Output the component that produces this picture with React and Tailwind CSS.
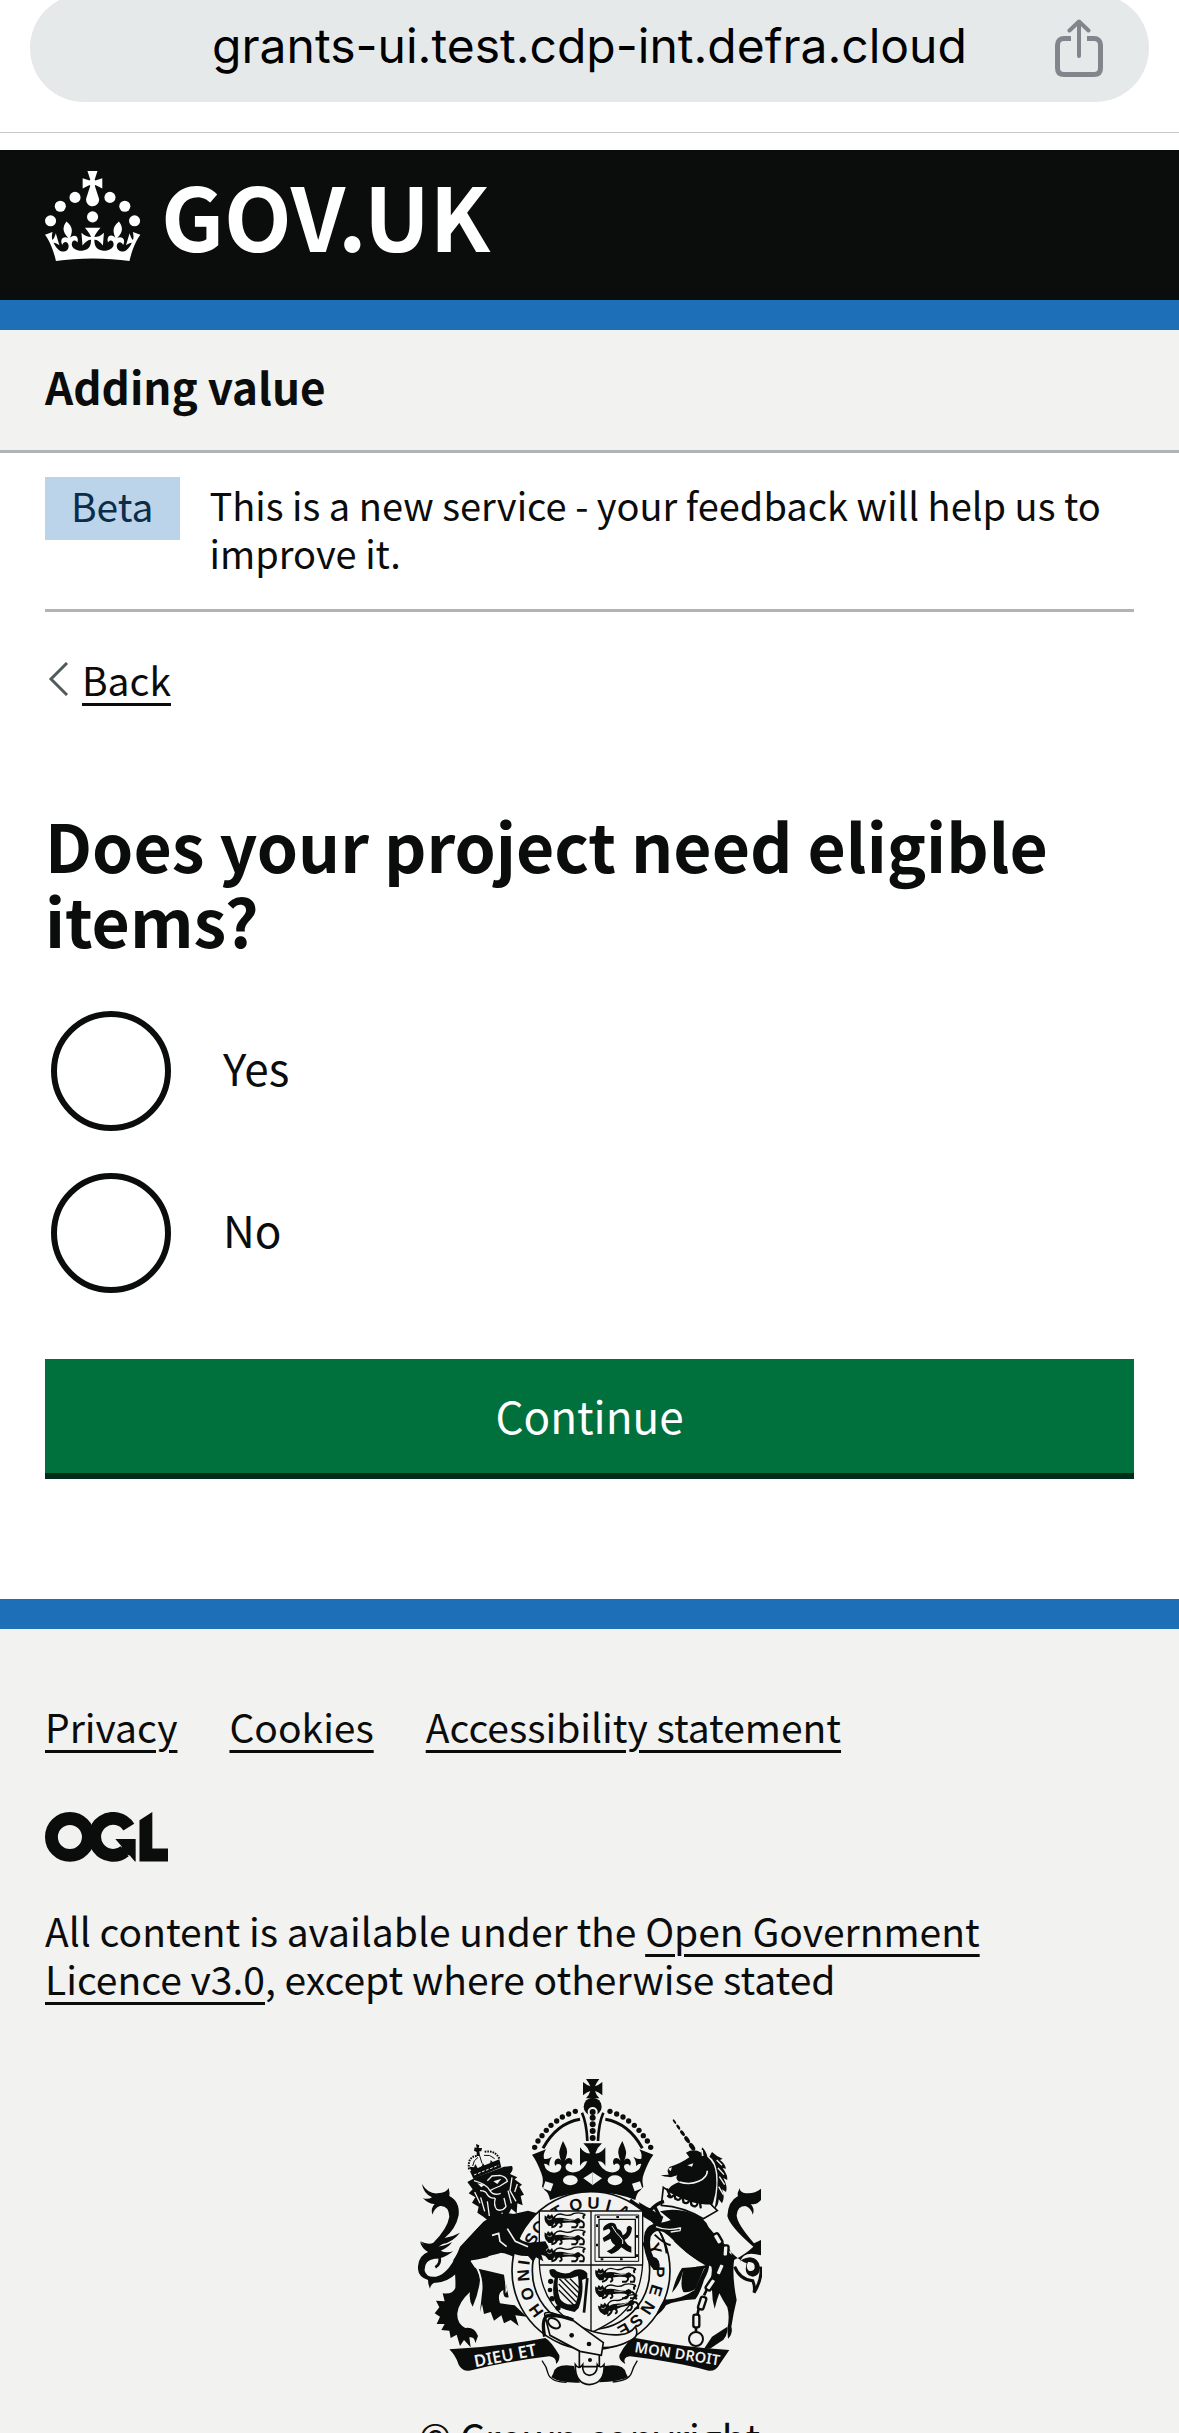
import React, { useState } from "react";

const INK = "#0b0c0c";
const PAPER = "#f2f2f0";

function ShareIcon() {
  return (
    <svg viewBox="0 0 48 58" className="h-[58px] w-12" fill="none" stroke="#80868b" strokeLinecap="round" strokeLinejoin="round">
      <path d="M16 19.500H9C5 19.500 2.500 22 2.500 26V49c0 4.500 2.500 6.500 6.500 6.500h30c4 0 6.500-2 6.500-6.500V26c0-4-2.500-6.500-6.500-6.500H32" strokeWidth="5" strokeLinecap="butt" />
      <path d="M24 3v34" strokeWidth="4" />
      <path d="M14.500 11.500 24 2.500l9.500 9" strokeWidth="4" />
    </svg>
  );
}

function CrownMark() {
  return (
    <svg viewBox="0 0 64 60" className="h-[90px] w-24 shrink-0" fill="#fff" aria-hidden="true">
      <circle cx="20" cy="17.6" r="3.7" />
      <circle cx="10.2" cy="23.5" r="3.7" />
      <circle cx="3.7" cy="33.2" r="3.7" />
      <circle cx="31.7" cy="30.6" r="3.7" />
      <circle cx="43.3" cy="17.6" r="3.7" />
      <circle cx="53.2" cy="23.5" r="3.7" />
      <circle cx="59.7" cy="33.2" r="3.7" />
      <path d="M33.1,9.8c.2-.1.3-.3.5-.5l4.6,2.4v-6.8l-4.6,1.5c-.1-.2-.3-.3-.5-.5l1.9-5.9h-6.7l1.9,5.9c-.2.1-.3.3-.5.5l-4.6-1.5v6.8l4.6-2.4c.1.2.3.3.5.5l-2.6,8c-.9,2.8,1.2,5.7,4.1,5.7h0c3,0,5.1-2.9,4.1-5.7l-2.6-8ZM37,37.9s-3.4,3.8-4.1,6.1c2.2,0,4.2-.5,6.4-2.8l-.7,8.5c-2-2.8-4.4-4.1-5.7-3.8.1,3.1.5,6.7,5.8,7.2,3.7.3,6.7-1.5,7-3.8.4-2.6-2-4.3-3.7-1.6-1.4-4.5,2.4-6.1,4.9-3.2-1.9-4.5-1.8-7.7,2.4-10.9,3,4,2.6,7.3-1.2,11.1,2.4-1.3,6.2,0,4,4.6-1.2-2.8-3.7-2.2-4.2.2-.3,1.7.7,3.7,3,4.2,1.9.3,4.7-.9,7-5.9-1.3,0-2.4.7-3.9,1.7l2.4-8c.6,2.3,1.4,3.7,2.2,4.5.6-1.6.5-2.8,0-5.3l5,1.8c-2.6,3.6-5.2,8.7-7.3,17.5-7.4-1.1-15.7-1.7-24.5-1.7h0c-8.8,0-17.1.6-24.5,1.7-2.1-8.9-4.7-13.9-7.3-17.5l5-1.8c-.5,2.5-.6,3.7,0,5.3.8-.8,1.6-2.3,2.2-4.5l2.4,8c-1.5-1-2.6-1.7-3.9-1.7,2.3,5,5.2,6.2,7,5.9,2.3-.4,3.3-2.4,3-4.2-.5-2.4-3-3.1-4.2-.2-2.2-4.6,1.6-6,4-4.6-3.7-3.7-4.2-7.1-1.2-11.1,4.2,3.2,4.3,6.4,2.4,10.9,2.5-2.8,6.3-1.3,4.9,3.2-1.8-2.7-4.1-1-3.7,1.6.3,2.3,3.3,4.1,7,3.8,5.4-.5,5.7-4.2,5.8-7.2-1.3-.2-3.7,1-5.7,3.8l-.7-8.5c2.2,2.3,4.2,2.7,6.4,2.8-.7-2.3-4.1-6.1-4.1-6.1h10.6Z" />
    </svg>
  );
}

function LicenceMark() {
  return (
    <svg viewBox="0 0 483 196" className="h-[50px] w-[123px]" fill="none" stroke={INK} strokeWidth="50.5" role="img" aria-label="OGL">
      <circle cx="97.8" cy="97.8" r="72.5" />
      <path d="M329 59A72.5 72.5 0 1 0 313 154" />
      <path d="M276 106h80v88h-3l-20-23-26-8-7-30Z" fill={INK} stroke="none" />
      <path d="M371 32.5 421.5 0v143H483v51H371Z" fill={INK} stroke="none" />
    </svg>
  );
}

const PEARLS = [[526, 154], [506, 162], [487, 171], [470, 183], [453, 196], [439, 211], [426, 227], [414, 243], [404, 262]];

/* Letters of the garter motto with their bearing, in degrees clockwise from due west. */
const GARTER_LETTERS = [["H", -36], ["O", -20], ["N", -4], ["I", 7], ["S", 28], ["O", 40], ["T", 60], ["Q", 77], ["U", 92], ["I", 105], ["A", 119], ["Y", 161], ["P", 181], ["E", 197], ["N", 213], ["S", 228], ["E", 241]];

function CrownHalf() {
  return (
    <g>
      {PEARLS.map(([x, y]) => (
        <circle key={x} cx={x} cy={y} r="8" />
      ))}
      <path d="M540 178Q470 190 429 265" fill="none" stroke={INK} strokeWidth="9" />
      <path d="M546 158Q560 190 562 243" fill="none" stroke={INK} strokeWidth="8" />
      <path d="M396 284 438 268Q428 284 432 296Q442 300 456 290Q446 304 448 318Q438 310 432 312Q438 338 462 338Q480 338 484 322Q484 312 474 312Q468 312 466 318Q460 306 468 298Q478 292 484 302Q474 282 480 266Q484 254 489 243Q496 256 500 266Q504 282 494 302Q502 290 514 296Q520 306 514 316Q510 308 502 311Q492 318 500 330Q510 340 528 336Q552 330 562 304Q548 302 540 318V262Q554 282 570 280Q564 262 550 250H579V395Q500 398 450 420Q446 398 436 392L426 380Q432 360 424 340Q412 306 396 284Z" />
      <ellipse cx="511" cy="361" rx="22" ry="15" fill={PAPER} />
      <path d="M436 364 460 371 452 394 429 385Z" fill={PAPER} />
      <path d="M550 355 579 336V376Z" fill={PAPER} />
    </g>
  );
}

function PassantBeast({ x, y }) {
  return (
    <g transform={`translate(${x} ${y})`}>
      <path d="M4 4 10 8 14 0 20 6 26 0 30 8 36 4Q38 16 34 24L28 36H16L6 24Q2 14 4 4Z" />
      <path d="M30 14Q50 8 70 14T104 12Q116 16 112 24T92 26Q72 24 54 28L34 30Z" />
      <path d="M34 8Q44-4 60 2T92-2Q112-6 126 2" fill="none" stroke={INK} strokeWidth="4" />
      <path d="M126 2Q116 6 122 14M42 26Q38 38 24 40M52 26Q60 38 48 40M98 24Q108 32 96 40H84M112 20Q126 24 120 40H108" fill="none" stroke={INK} strokeWidth="6" />
      <path d="M12 14Q18 20 26 14M60 18Q80 22 96 16" fill="none" stroke={PAPER} strokeWidth="2" />
    </g>
  );
}

function Shield() {
  return (
    <g>
      <path d="M418 453H728V610Q722 730 636 784Q600 806 573 818Q540 806 500 776Q422 716 418 610Z" fill={PAPER} stroke={INK} strokeWidth="4" />
      <path d="M573 453V818M418 615H728" stroke={INK} strokeWidth="4" />
      <PassantBeast x={430} y={462} />
      <PassantBeast x={430} y={513} />
      <PassantBeast x={430} y={564} />
      <PassantBeast x={582} y={625} />
      <PassantBeast x={582} y={675} />
      <g transform="translate(6 0) rotate(-14 590 730)">
        <PassantBeast x={582} y={732} />
      </g>
      <g fill="none" stroke={INK}>
        <path d="M585 465H716V604H585Z" strokeWidth="3" />
        <path d="M597 478H706V592H597Z" strokeWidth="4" />
        <path d="M591 471H711V598H591Z" strokeWidth="6" strokeDasharray="8 50" />
      </g>
      <path d="M622 492Q634 484 646 492L652 506Q666 510 668 526Q684 520 680 504Q688 490 696 504Q694 530 674 540Q680 556 694 560V578Q678 574 664 562Q650 578 634 582L620 574Q636 568 646 556Q634 548 632 536L612 546 608 534 626 522Q636 512 626 506L610 512Q606 500 622 492Z" />
      <path d="M636 498Q648 520 660 530T668 552" fill="none" stroke={PAPER} strokeWidth="3" />
      <path d="M448 630Q462 622 470 634Q500 648 524 630Q548 622 562 640V654L546 660Q552 700 536 744L524 756Q500 752 484 744Q464 736 462 714Q456 684 464 654Q448 650 448 630Z" />
      <path d="M474 654Q506 660 534 648Q540 700 526 732Q494 738 480 716Q470 690 474 654Z" fill={PAPER} />
      <path d="M476 690 522 736M476 672 528 726M478 656 532 712M494 656 536 698M510 656 538 684" stroke={INK} strokeWidth="4" />
      <circle cx="452" cy="664" r="8" />
      <circle cx="450" cy="690" r="7" />
      <circle cx="456" cy="716" r="8" />
      <circle cx="474" cy="744" r="8" />
      <path d="M562 654 552 758" stroke={INK} strokeWidth="8" />
    </g>
  );
}

function LionBody() {
  return (
    <g>
      <path d="M66 372Q84 402 112 400Q140 398 146 384Q150 400 148 408Q180 424 176 466Q168 506 134 534Q158 530 180 518Q158 546 128 552Q112 560 92 584Q80 560 60 544Q86 556 100 548Q142 506 148 470Q146 436 120 438Q102 444 98 464Q90 446 104 432Q86 432 68 414Q84 420 96 412Q70 400 66 372Z" />
      <path d="M54 628Q52 588 84 576Q66 566 60 546Q78 560 92 560Q130 562 156 546Q146 562 122 572Q138 580 160 574Q124 600 104 596Q72 600 74 632Q80 654 108 650Q150 640 180 560L250 486L300 540V580Q262 590 214 600L170 640Q138 670 104 668Q92 672 90 686Q84 674 84 660Q56 652 54 628Z" />
      <path d="M118 588Q124 612 106 622" fill="none" stroke={INK} strokeWidth="8" />
      <path d="M252 484Q300 452 340 462L384 452 420 462V560L340 590Q290 566 262 592Q226 600 212 602Q236 628 240 660Q236 700 218 740Q206 720 210 696Q176 726 172 760Q170 790 196 804Q224 800 234 828L226 850Q224 828 208 832L212 862 192 840 180 858 170 824 152 834 148 812 124 810 134 792 110 792 120 770 104 760 118 742 108 722 134 724 128 700Q158 704 166 684Q168 640 160 600L200 540Z" />
      <path d="M236 626 312 644Q318 680 316 700Q326 694 318 672L326 712Q308 716 310 690Q290 700 300 730L344 736 380 770 346 766 356 798 332 780 312 790 304 766 282 782 272 756 252 762 246 732 240 756 246 700Q252 664 236 626Z" />
    </g>
  );
}

function LionFront() {
  return (
    <g>
      <path d="M302 500Q330 500 350 528Q366 546 390 548L436 544 446 562 434 574 442 590 424 584 430 604 408 592 400 606 384 588Q340 590 306 560Z" />
      <path d="M276 526 296 520 300 544 320 560M322 506 346 544 384 560M214 602 226 620 250 626" fill="none" stroke={PAPER} strokeWidth="5" />
      <path d="M202 366 228 352 312 320 336 318Q342 330 330 342L352 352 344 358 366 374 358 380 372 404 362 408 368 436 352 430 350 460 334 446 318 476 306 456Q290 500 262 480L250 470 232 458 236 440 216 428 226 412 206 400 218 388Z" />
      <g fill="none" stroke={PAPER} strokeWidth="4">
        <path d="M222 362Q260 372 270 392 280 408 302 400M262 362 276 348 300 346Q320 350 322 364L300 378Q284 384 270 392M240 392Q258 392 262 404 270 416 284 414M286 414Q280 436 290 448 306 456 318 440L312 414" />
        <path d="M336 352 330 392 348 424M324 392 334 430M224 396 240 430M242 412 254 454M262 424 268 468M352 372 344 396" />
      </g>
      <path d="M232 370 254 374 244 382ZM280 364 304 356 292 372Z" fill={PAPER} />
      <path d="M210 334 298 298 304 322 220 356Z" />
      <path d="M214 334 208 320 222 322 226 312 234 326 246 318 248 308 256 320 270 314 272 300 282 310 296 300 298 320Z" />
      <path d="M207 328Q202 290 230 288M298 296Q284 268 252 276" fill="none" stroke={INK} strokeWidth="6" strokeDasharray="5 3" />
      <path d="M218 318Q220 300 234 292M284 296Q270 282 252 286M238 284 246 310" fill="none" stroke={INK} strokeWidth="3" />
      <path d="M228 252 238 256 236 264 246 264 244 274 238 274 240 288H230L230 276 222 272 224 262 230 264Z" />
      <path d="M222 345 296 316" stroke={PAPER} strokeWidth="3" strokeDasharray="8 5" />
    </g>
  );
}

function Unicorn() {
  return (
    <g>
      <g transform="rotate(55 820 180)">
        <ellipse cx="826" cy="180" rx="8" ry="3" />
        <ellipse cx="846" cy="180" rx="9" ry="4" />
        <ellipse cx="868" cy="180" rx="10" ry="5" />
        <ellipse cx="892" cy="180" rx="12" ry="6" />
        <ellipse cx="918" cy="180" rx="13" ry="7" />
      </g>
      <path d="M858 278Q880 264 904 278L906 262Q918 272 922 290Q946 310 948 344Q954 398 930 452L800 412Q796 380 838 366Q824 356 832 346L812 352Q790 350 782 346L806 344Q798 328 810 320Q840 312 868 292Z" />
      <path d="M862 316 880 310 876 320ZM804 326 816 322 812 334Z" fill={PAPER} />
      <path d="M838 366Q870 376 896 364 922 352 922 332M906 270 908 288" fill="none" stroke={PAPER} strokeWidth="5" />
      <path d="M936 276Q950 290 968 296L960 300Q976 312 978 326L968 324Q984 346 982 360L970 354Q984 380 978 396L966 388Q976 412 966 430L956 418Q956 436 944 446Q956 380 952 340Q946 300 928 290Z" />
      <path d="M950 300 966 316M954 324 972 344M958 350 974 374M956 380 970 404" stroke={PAPER} strokeWidth="4" />
      <path d="M790 382Q820 404 860 418 900 434 930 430L952 452 910 476Q850 440 784 436Z" fill={PAPER} stroke={INK} strokeWidth="5" />
      <path d="M802 388 810 408M822 398 826 416M846 408 850 424M872 418 874 434M900 426 902 442M804 408Q812 416 818 408M826 416Q836 424 842 414M850 426Q860 434 866 424M876 436Q888 444 892 432" stroke={INK} strokeWidth="7" fill="none" strokeLinecap="round" />
      <path d="M780 454Q830 442 880 462Q916 474 926 502Q944 526 972 550L960 600Q940 590 936 620Q880 600 840 560Q800 520 790 516Q764 506 752 530Q746 560 760 590Q784 596 778 630Q762 634 752 618Q728 580 732 530Q734 500 760 492Q800 486 812 480Z" />
      <path d="M768 500Q800 514 840 504M812 516 840 512 842 502" fill="none" stroke={PAPER} strokeWidth="4" />
      <path d="M782 520Q796 548 800 580M764 524Q790 550 812 556" fill="none" stroke={INK} strokeWidth="6" />
      <path d="M690 420Q720 446 752 450Q770 430 792 424M764 440 780 470M748 452 768 480" fill="none" stroke={INK} strokeWidth="10" />
      <path d="M820 542Q880 560 926 600Q934 620 912 660Q900 700 886 718Q826 722 798 736Q790 752 768 768Q778 736 796 718Q840 720 884 690Q896 660 914 624L848 636Q842 670 816 698Q828 650 846 624Q890 622 916 616Q870 590 820 542Z" />
      <path d="M848 636Q880 616 914 620L886 688Q864 700 850 696 840 680 848 636Z" />
      <path d="M926 590 962 560 1004 590Q994 640 1010 720Q1000 760 994 800Q1000 820 984 836L982 806Q990 770 982 742Q968 720 958 700Q950 720 944 746Q936 720 936 690L914 690Q950 640 926 590Z" />
      <path d="M982 800Q984 834 960 846L930 866H912L936 830Z" />
      <path d="M1083 386Q1060 404 1030 398Q1018 394 1020 384Q1010 400 1014 408Q984 424 982 468Q990 500 1060 560Q1040 580 1002 600L990 570 960 540Q1010 600 1040 610Q1030 646 1058 650Q1080 648 1080 622Q1078 596 1050 592Q1024 596 1020 606Q1030 570 1083 586V540L1062 550Q1010 490 1010 466Q1012 438 1036 438Q1054 444 1058 464Q1066 446 1052 432Q1070 436 1083 420Z" />
      <path d="M1044 606Q1066 604 1064 624Q1060 636 1046 632Q1036 622 1044 606Z" fill={PAPER} />
      <path d="M1004 620Q1020 660 1058 662Q1066 680 1062 698Q1086 660 1083 620" fill="none" stroke={INK} strokeWidth="9" />
      <g fill={PAPER} stroke={INK} strokeWidth="7">
        <rect x="944" y="520" width="18" height="34" rx="6" transform="rotate(-30 953 537)" />
        <rect x="968" y="556" width="17" height="34" rx="6" transform="rotate(4 976 573)" />
        <rect x="952" y="610" width="17" height="36" rx="6" transform="rotate(24 960 628)" />
        <rect x="924" y="654" width="17" height="38" rx="6" transform="rotate(34 932 673)" />
        <rect x="898" y="710" width="17" height="38" rx="6" transform="rotate(18 906 729)" />
        <rect x="880" y="764" width="18" height="38" rx="6" />
      </g>
      <path d="M966 588V610M944 642 938 656M920 690 912 706M896 746 892 766M888 802V816" stroke={INK} strokeWidth="8" />
      <circle cx="888" cy="837" r="21" fill="none" stroke={INK} strokeWidth="6" />
    </g>
  );
}

function RoyalArms() {
  return (
    <svg viewBox="54 54 1032 924" className="h-[308px] w-[344px]" fill={INK} role="img" aria-label="Royal coat of arms">
      <LionBody />
      <circle cx="573" cy="632" r="237" fill={PAPER} stroke={INK} strokeWidth="5" />
      <circle cx="573" cy="632" r="176" fill={PAPER} stroke={INK} strokeWidth="5" />
      <g fontFamily="'Liberation Sans', sans-serif" fontSize="50" fontWeight="700" textAnchor="middle">
        {GARTER_LETTERS.map(([letter, angle]) => (
          <text key={angle} x="573" y="446" transform={`rotate(${angle - 90} 573 632)`}>
            {letter}
          </text>
        ))}
      </g>
      <path d="M716 426 790 470 780 500 730 470Z" />
      <Shield />
      <LionFront />
      <Unicorn />

      <CrownHalf />
      <g transform="translate(1156 0) scale(-1 1)">
        <CrownHalf />
      </g>
      <path d="M558 57H598Q588 70 585 79Q595 76 607 66V106Q595 96 585 93Q588 104 598 115H558Q568 104 571 93Q561 96 549 106V66Q561 76 571 79Q568 70 558 57Z" />
      <circle cx="578" cy="140" r="27" />
      <circle cx="578" cy="156" r="15" fill={PAPER} />
      {[156, 173, 193, 213, 234].map((y) => (
        <circle key={y} cx="578" cy={y} r="9" />
      ))}

      <g fill={PAPER} stroke={INK} strokeWidth="5">
        <path d="M538 860H598V920H538Z" />
        <path d="M500 776Q580 830 660 824Q690 822 706 800Q720 830 690 842Q640 868 590 862Q520 850 456 800Q430 780 438 766Q450 754 468 764Z" />
        <path d="M434 764Q432 756 450 758L510 774 560 812 610 848 604 886 540 874 450 826Z" />
        <path d="M526 914Q536 930 548 914Q546 944 568 946Q592 944 592 914Q602 928 612 914Q616 970 568 974Q524 970 526 914Z" />
      </g>
      <path d="M434 830Q424 780 440 768Q470 762 520 780" fill="none" stroke={INK} strokeWidth="10" />
      <ellipse cx="462" cy="790" rx="20" ry="13" fill="none" stroke={INK} strokeWidth="6" transform="rotate(35 462 790)" />
      <circle cx="515" cy="826" r="7" />
      <circle cx="567" cy="852" r="7" />
      <circle cx="570" cy="900" r="6" />

      <g>
        <path d="M460 940Q464 916 500 916L522 918Q528 950 540 968Q480 970 454 952Z" />
        <path d="M426 902Q440 920 444 940 452 966 500 967" fill="none" stroke={INK} strokeWidth="4" />
        <path d="M678 940Q674 916 638 916L614 918Q608 950 598 967Q656 966 684 952Z" />
        <path d="M712 902Q700 920 694 940 686 962 638 966" fill="none" stroke={INK} strokeWidth="4" />
        <path d="M148 868Q300 860 436 834Q452 842 478 886Q480 902 468 912Q470 892 448 889Q320 904 208 932Q186 934 176 914Q168 888 148 868Z" />
        <path d="M988 870Q850 862 706 834Q680 840 658 886Q656 902 676 912Q666 892 690 889Q830 906 926 932Q948 934 958 914Z" />
      </g>
      <g fill={PAPER} fontFamily="'Noto Sans', sans-serif" fontSize="50" fontWeight="600">
        <text transform="translate(226 922) rotate(-11)">DIEU ET</text>
        <text transform="translate(702 876) rotate(9)" fontSize="44">
          MON DROIT
        </text>
      </g>
    </svg>
  );
}

function TextLink({ children }) {
  return (
    <a href="#" className="underline decoration-[3px] underline-offset-[7px]">
      {children}
    </a>
  );
}

function RadioOption({ id, label, checked, onSelect }) {
  return (
    <div className="flex items-center gap-[52px]">
      <input
        type="radio"
        name="eligible-items"
        id={id}
        checked={checked}
        onChange={onSelect}
        className="size-[120px] shrink-0 appearance-none rounded-full border-[6px] border-[#0b0c0c] bg-white bg-clip-content p-6 checked:bg-[#0b0c0c]"
      />
      <label htmlFor={id} className="pb-2 text-[44px] leading-[60px]">
        {label}
      </label>
    </div>
  );
}

export default function App() {
  const [answer, setAnswer] = useState(null);
  return (
    <div className="min-h-screen bg-[#f2f2f0] font-['Noto_Sans_CJK_SC','Noto_Sans',sans-serif] text-[39px] leading-[48px] text-[#0b0c0c]">
      <div className="overflow-hidden border-b border-[#c6c8ca] bg-white px-[30px] pb-[30px]">
        <div className="-mt-1.5 flex h-[108px] items-center rounded-full bg-[#e5e9ea] pr-[46px] pl-[94px]">
          <span className="flex-1 pb-1 text-center font-['Inter',sans-serif] text-[48px] leading-[60px] text-black">
            grants-ui.test.cdp-int.defra.cloud
          </span>
          <button type="button" aria-label="Share">
            <ShareIcon />
          </button>
        </div>
      </div>

      <header className="bg-white pt-[17px]">
        <div className="border-b-[30px] border-[#1d70b8] bg-[#0b0c0c] px-[45px] pt-[21px] pb-[39px]">
          <a href="#" className="flex h-[90px] w-fit items-center gap-5 text-[88px] leading-[90px] font-bold text-white">
            <CrownMark />
            <span className="pb-1">GOV.UK</span>
          </a>
        </div>
        <div className="border-b-[3px] border-[#b1b4b6] bg-[#f2f2f0] px-[45px] pt-[26px] pb-[34px]">
          <a href="#" className="block text-[44px] leading-[60px] font-bold">
            Adding value
          </a>
        </div>
      </header>

      <div className="bg-white px-[45px] pb-[120px]">
        <div className="flex items-start gap-[30px] border-b-[3px] border-[#b1b4b6] pt-6 pb-8">
          <strong className="bg-[#bbd4ea] px-[26px] pt-1 pb-[11px] font-normal text-[#0c2d4a]">Beta</strong>
          <p className="pt-1 text-[38px]">This is a new service - your feedback will help us to improve it.</p>
        </div>

        <a href="#" className="mt-[43px] flex w-fit items-center gap-3">
          <svg viewBox="0 0 25 34" className="h-[34px] w-[25px]" fill="none" stroke="#505a5f" strokeWidth="3" aria-hidden="true">
            <path d="M22 1 6 17 22 33" />
          </svg>
          <span className="underline decoration-[3px] underline-offset-[7px]">Back</span>
        </a>

        <main className="pt-[104px]">
          <form onSubmit={(e) => e.preventDefault()}>
            <fieldset>
              <legend>
                <h1 className="text-[66px] leading-[75px] font-bold">Does your project need eligible items?</h1>
              </legend>
              <div className="flex flex-col gap-[42px] pt-[54px] pl-1.5">
                <RadioOption id="answer-yes" label="Yes" checked={answer === "yes"} onSelect={() => setAnswer("yes")} />
                <RadioOption id="answer-no" label="No" checked={answer === "no"} onSelect={() => setAnswer("no")} />
              </div>
            </fieldset>
            <button
              type="submit"
              className="mt-[66px] block w-full border-b-[6px] border-[#002d18] bg-[#00703c] pt-[26px] pb-7 text-[44px] leading-[60px] text-white"
            >
              Continue
            </button>
          </form>
        </main>
      </div>

      <footer className="border-t-[30px] border-[#1d70b8] px-[45px] pt-[73px] pb-[75px]">
        <ul className="flex flex-wrap gap-x-[52px]">
          <li><TextLink>Privacy</TextLink></li>
          <li><TextLink>Cookies</TextLink></li>
          <li><TextLink>Accessibility statement</TextLink></li>
        </ul>
        <div className="pt-[62px]">
          <LicenceMark />
        </div>
        <p className="max-w-[980px] pt-11">
          All content is available under the <TextLink>Open Government Licence v3.0</TextLink>, except where otherwise stated
        </p>
        <a href="#" className="mx-auto mt-[76px] flex w-fit flex-col items-center gap-[26px]">
          <RoyalArms />
          <span>© Crown copyright</span>
        </a>
      </footer>
    </div>
  );
}
